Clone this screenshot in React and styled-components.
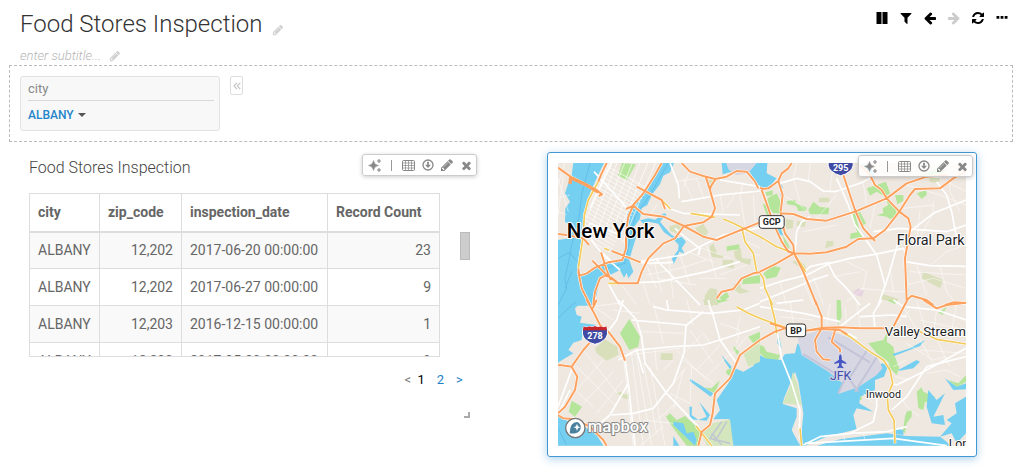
// App.jsx
import React, { useState } from "react";
import styled, { createGlobalStyle } from "styled-components";

const GlobalStyle = createGlobalStyle`
  * {
    box-sizing: border-box;
  }

  body {
    margin: 0;
    background: #fff;
    color: #666;
    font-family: Roboto, "Liberation Sans", sans-serif;
    font-size: 14px;
  }

  button, select {
    font: inherit;
    padding: 0;
    border: 0;
    background: none;
    cursor: pointer;
  }
`;

const Header = styled.header`
  display: flex;
  justify-content: space-between;
  align-items: flex-start;
  padding: 8px 11px 0 20px;
  height: 65px;
`;

const Title = styled.h1`
  display: flex;
  align-items: flex-end;
  gap: 10px;
  margin: 0;
  color: #333;
  font-size: 24px;
  font-weight: 300;
  line-height: 32px;
`;

const Subtitle = styled.p`
  display: flex;
  align-items: center;
  gap: 8px;
  margin: 6px 0 0;
  color: #b5b5b5;
  font-size: 13px;
  font-style: italic;
  font-weight: 300;
  line-height: 18px;
`;

const Actions = styled.div`
  display: flex;
  gap: 8px;
`;

const IconButton = styled.button`
  display: flex;
  align-items: center;
  justify-content: center;
  width: ${(p) => p.$width || 16}px;
  height: 20px;
  color: ${(p) => p.$color || "#000"};
`;

const EditButton = styled(IconButton)`
  color: #d0d0d0;
`;

const FilterBar = styled.section`
  display: flex;
  align-items: flex-start;
  gap: 10px;
  margin: 0 8px 0 9px;
  padding: 10px;
  height: 77px;
  border: 1px dashed #bbb;
`;

const FilterCard = styled.div`
  width: 200px;
  padding: 4px 5px 7px 7px;
  border: 1px solid #e2e2e2;
  border-radius: 3px;
  background: #f8f8f8;
`;

const FilterLabel = styled.label`
  display: block;
  padding-bottom: 3px;
  border-bottom: 1px solid #d8d8d8;
  color: #888;
  font-size: 13px;
  line-height: 16px;
`;

const FilterValue = styled.div`
  display: flex;
  align-items: center;
  gap: 4px;
  padding-top: 6px;
  color: #555;
`;

const FilterSelect = styled.select`
  appearance: none;
  field-sizing: content;
  color: #2486ca;
  font-size: 12px;
  font-weight: 500;
  line-height: 16px;
`;

const CollapseButton = styled.button`
  display: flex;
  align-items: center;
  justify-content: center;
  width: 13px;
  height: 19px;
  border: 1px solid #ddd;
  border-radius: 2px;
  color: #c4c4c4;
`;

const Board = styled.main`
  display: grid;
  grid-template-columns: 461fr 430fr;
  gap: 66px;
  align-items: start;
  padding: 10px 44px 14px 20px;
`;

const Widget = styled.section`
  position: relative;
  padding: ${(p) => (p.$active ? "10px" : "0 10px 0 8px")};
  border: 1px solid ${(p) => (p.$active ? "#4298d4" : "transparent")};
  border-radius: 3px;
  box-shadow: ${(p) => (p.$active ? "0 2px 8px rgba(66, 152, 212, 0.45)" : "none")};
`;

const WidgetTitle = styled.h2`
  margin: 4px 0 14px;
  color: #444;
  font-size: 16px;
  font-weight: 300;
  line-height: 22px;
`;

const Toolbar = styled.div`
  position: absolute;
  top: ${(p) => (p.$active ? 2 : 1)}px;
  right: 3px;
  display: flex;
  align-items: center;
  gap: 3px;
  height: 22px;
  padding: 0 2px 0 4px;
  border: 1px solid #ccc;
  border-radius: 3px;
  background: rgba(255, 255, 255, 0.85);
  box-shadow: 0 1px 4px rgba(0, 0, 0, 0.2);
`;

const Divider = styled.span`
  width: 1px;
  height: 11px;
  margin: 0 5px;
  background: #999;
`;

const TableArea = styled.div`
  display: flex;
  align-items: flex-start;
  justify-content: space-between;
`;

const TableFrame = styled.div`
  height: 164px;
  overflow: hidden;
  border-bottom: 1px solid #ddd;
`;

const Table = styled.table`
  border-collapse: collapse;
  table-layout: fixed;
  width: 411px;
`;

const Th = styled.th`
  width: ${(p) => p.$width}px;
  height: 38px;
  padding: 0 8px;
  border: 1px solid #ddd;
  border-bottom-width: 2px;
  font-weight: 700;
  text-align: left;
`;

const Td = styled.td`
  height: 37px;
  padding: 0 8px;
  border: 1px solid #ddd;
  text-align: ${(p) => (p.$number ? "right" : "left")};
  white-space: nowrap;

  tr:nth-child(odd) > & {
    background: #f9f9f9;
  }
`;

const ScrollThumb = styled.div`
  width: 10px;
  height: 28px;
  margin-top: 39px;
  border: 1px solid #bbb;
  background: #ccc;
`;

const Pager = styled.nav`
  display: flex;
  justify-content: flex-end;
  gap: 12px;
  padding: 15px 7px 0 0;
  font-size: 13px;
  line-height: 16px;
`;

const PageButton = styled.button`
  min-width: 7px;
  margin-left: ${(p) => (p.$current ? "-6px" : 0)};
  color: ${(p) => (p.$current ? "#000" : p.$muted ? "#777" : "#2380c6")};
`;

const ResizeHandle = styled.div`
  width: 6px;
  height: 6px;
  margin: 24px 0 0 auto;
  border: solid #aaa;
  border-width: 0 2px 2px 0;
`;

const Map = styled.svg`
  display: block;
  width: 100%;
  height: auto;
  background: #efe8e1;
`;

const MapText = styled.text`
  fill: ${(p) => p.$color || "#222"};
  font-family: Roboto, "Liberation Sans", sans-serif;
  font-size: ${(p) => p.$size}px;
  font-weight: ${(p) => p.$weight || 400};
  paint-order: stroke;
  stroke: ${(p) => p.$halo || "#fff"};
  stroke-width: ${(p) => (p.$halo === "none" ? 0 : 6)}px;
  stroke-linejoin: round;
`;

const glyphs = {
  pencil:
    "M491 1536l91-91-235-235-91 91v107h128v128h107zm523-928q0-22-22-22-10 0-17 7l-542 542q-7 7-7 17 0 22 22 22 10 0 17-7l542-542q7-7 7-17zm-54-192l416 416-832 832h-416v-416zm683 96q0 53-37 90l-166 166-416-416 166-165q36-38 90-38 53 0 91 38l235 234q37 39 37 91z",
  times:
    "M1490 1322q0 40-28 68l-136 136q-28 28-68 28t-68-28l-294-294-294 294q-28 28-68 28t-68-28l-136-136q-28-28-28-68t28-68l294-294-294-294q-28-28-28-68t28-68l136-136q28-28 68-28t68 28l294 294 294-294q28-28 68-28t68 28l136 136q28 28 28 68t-28 68l-294 294 294 294q28 28 28 68z",
  arrow:
    "M1664 896v128q0 53-32.5 90.5t-84.5 37.5h-704l293 294q38 36 38 90t-38 90l-75 76q-37 37-90 37-52 0-91-37l-651-652q-37-37-37-90 0-52 37-91l651-650q38-38 91-38 52 0 90 38l75 74q38 38 38 91t-38 91l-293 293h704q52 0 84.5 37.5t32.5 90.5z",
  refresh:
    "M1639 1056q0 5-1 7-64 268-268 434.5t-478 166.5q-146 0-282.5-55t-243.5-157l-129 129q-19 19-45 19t-45-19-19-45v-448q0-26 19-45t45-19h448q26 0 45 19t19 45-19 45l-137 137q71 66 161 102t187 36q134 0 250-65t186-179q11-17 53-117 8-23 30-23h192q13 0 22.5 9.5t9.5 22.5zm25-800v448q0 26-19 45t-45 19h-448q-26 0-45-19t-19-45 19-45l138-138q-148-137-349-137-134 0-250 65t-186 179q-11 17-53 117-8 23-30 23h-199q-13 0-22.5-9.5t-9.5-22.5v-7q65-268 270-434.5t480-166.5q146 0 284 55.5t245 156.5l130-129q19-19 45-19t45 19 19 45z",
  pause: "M192 128h640v1536h-640zM960 128h640v1536h-640z",
  filter:
    "M1595 295q17 41-14 70l-493 493v742q0 42-39 59-13 5-25 5-27 0-45-19l-256-256q-19-19-19-45v-486l-493-493q-31-29-14-70 17-39 59-39h1280q42 0 59 39z",
  more: "M192 640h360v360h-360zM716 640h360v360h-360zM1240 640h360v360h-360z",
};

const Glyph = ({ name, size = 14, flip }) => (
  <svg width={size} height={size} viewBox="0 0 1792 1792" fill="currentColor" aria-hidden="true">
    <path d={glyphs[name]} transform={flip ? "translate(1792 0) scale(-1 1)" : undefined} />
  </svg>
);

const Sparkle = () => (
  <svg width="15" height="15" viewBox="0 0 15 15" fill="currentColor" aria-hidden="true">
    <path d="M5.5 2.5 Q6.2 6.8 10.5 7.5 Q6.2 8.2 5.5 12.5 Q4.8 8.2 .5 7.5 Q4.8 6.8 5.5 2.5Z" stroke="currentColor" strokeWidth=".5" />
    <path d="M11 1v4M9 3h4M11 10v4M9 12h4" stroke="currentColor" strokeWidth="1.1" />
  </svg>
);

const Grid = () => (
  <svg width="13" height="11" viewBox="0 0 13 11" fill="none" stroke="currentColor" aria-hidden="true">
    <rect x=".5" y=".5" width="12" height="10" rx="1" />
    <path d="M.5 3h12M.5 5.5h12M.5 8h12M3.5 .5v10M6.5 .5v10M9.5 .5v10" strokeWidth=".7" />
  </svg>
);

const Download = () => (
  <svg width="12" height="12" viewBox="0 0 12 12" fill="none" stroke="currentColor" aria-hidden="true">
    <circle cx="6" cy="6" r="5" strokeWidth="1.3" />
    <path d="M6 2.8v3" strokeWidth="1.8" />
    <path d="M3 5.8h6L6 9Z" fill="currentColor" stroke="none" />
  </svg>
);

// map geometry, split in four tiles that share one coordinate grid
const tiles = [
  {
    x: 0,
    y: 0,
    water: [
      "M100 54H192L170 100L150 145L137 185L132 245L122 300L112 365L118 394L145 385L190 355L245 347L256 295L256 245L262 205L300 155L335 105L365 54H402L390 82L370 92L360 118L335 150L322 180L305 190L300 222L282 245L292 265L275 320L268 345L280 380L265 400L260 384L252 398L240 375L215 388L190 390L177 410L170 450L155 482H54V285L90 280L82 262L92 242L75 230L76 190L90 170L75 145L88 105L95 90Z",
      "M545 54H660V128L645 110L630 82L600 74L575 80L548 88Z",
      "M300 226L325 220L345 224L372 205L380 208L360 230L375 248L395 270L415 280L425 275L438 290L425 310L434 326L418 320L410 340L400 358L396 340L414 316L416 300L398 280L372 262L355 236L325 230L310 236Z",
    ],
    dim: ["M558 54H650L625 84L590 90L566 74Z"],
    park: ["M246 54L288 58L260 106L234 92Z", "M560 304L598 298L598 312L560 318Z", "M610 400L660 390V415L606 418Z", "M82 455L100 433L126 430L122 445L95 465Z", "M538 458L560 440L568 455L550 470Z"],
    moss: ["M388 244L415 236L426 250L410 266L390 258Z", "M465 250L490 236L505 262L490 280Z", "M508 305L520 294L532 328L552 330L548 340L515 336Z", "M548 345L580 345L582 370L548 365Z", "M582 318L602 310L606 340L634 342L630 360L600 350L585 340Z", "M495 450L510 430L530 432L535 480H492Z", "M585 415L598 410L605 430L630 440L600 446L575 430Z", "M500 105L522 102L512 122Z"],
    major: ["M365 165L385 190L430 205L600 210", "M425 170L540 150L660 138", "M300 350L430 330L550 270L660 248", "M405 250L440 280L480 310L475 330", "M205 415L240 480", "M235 415L360 410L500 380L600 350", "M390 54L415 120L418 160", "M300 352L332 355L400 352", "M540 105L660 125", "M240 375L200 340L165 300L140 260L150 235L240 270", "M215 54L150 190", "M162 80L262 190", "M185 322L215 350", "M350 345L480 480"],
    minor: ["M430 100L460 170M405 110L475 100M470 100L490 155M450 70L430 130M330 210L350 180M320 360L350 430M320 390L420 370L500 345M340 340L365 440M385 330L400 460M420 330L450 420M350 400L470 420M440 320L520 350M500 300L530 400M460 300L570 340M540 150L550 200M610 110L600 150L615 240M640 150L645 230M590 140L560 190M620 290L660 310M630 330L660 330M540 390L620 360M480 400L560 400M245 420L290 480M310 415L330 480M54 100L85 200M70 90L54 210M54 160L90 150M54 200L80 210M74 54L54 120"],
    high: ["M54 68L95 97L130 115L175 140L186 148L176 153", "M200 54L185 85L175 110", "M365 54L345 90L310 145L280 180L265 215L258 260L258 310L247 345L205 352L165 368L140 385L118 392L115 372", "M115 380L125 430L150 480", "M160 480L165 440L180 400L195 392L215 398L235 415H293L305 380L325 340L370 295L405 280L432 243", "M258 192L280 182L310 207L370 215L432 243L490 275L530 285L570 268L610 252L660 232", "M290 125L365 165L375 192", "M425 54L450 80L490 93L525 102L560 95L590 78L620 80L645 110L655 130", "M497 95L510 135L525 190L515 215L490 232L432 243", "M527 102L512 125L510 140", "M215 318L302 352", "M157 347L200 390L235 415", "M183 322L200 375L212 405", "M54 267L80 270L130 280L147 300", "M530 460L545 440L580 432L605 400L640 385L660 382"],
    yellow: ["M175 110L145 165L133 210L130 270L115 370", "M365 165L392 192", "M452 205L525 217", "M550 222L580 235L610 250L660 275", "M607 255L615 290L640 325L650 380", "M205 415H235", "M193 310L207 316"],
  },
  {
    x: 660,
    y: 0,
    water: ["M0 54H22L20 85L50 100L25 130L0 128Z", "M62 115L68 125L62 155Z", "M45 240L62 250L70 272L58 268Z", "M300 54L335 70L345 98L330 95Z"],
    dim: [],
    park: ["M8 178L18 178L38 225L28 230Z", "M22 160L50 145L64 175L60 205L40 205L28 190Z", "M16 142L38 136L38 150L20 154Z", "M80 168L105 165L110 175L140 188L138 198L115 198L108 182L82 178Z", "M145 195L160 170L180 186L208 188L205 208L150 208Z", "M68 270L85 298L90 312L75 302Z", "M10 385L40 362L62 368L50 395L20 402Z", "M272 208L285 205L300 260L310 275L270 282L272 265L292 262Z", "M290 205L300 200L318 235L308 242Z", "M320 130L378 110L390 145L375 155L350 140L330 152Z", "M405 150L430 150L430 168L412 178Z", "M350 210L370 205L368 190L385 180L378 165L410 185L408 215L390 222L380 215Z", "M470 145L500 135L500 150L485 162Z", "M230 475L240 465L243 480H230Z", "M475 95L530 70L560 80L520 90Z"],
    moss: ["M178 158H208V172H176Z", "M78 222L100 226L98 250L78 252Z", "M112 228L138 232L135 246L110 242Z", "M200 288H220V302L195 310Z", "M490 380L550 405L540 430L485 400Z", "M370 448L415 462L408 475L362 462Z", "M95 350L120 345L138 365L138 380Z", "M510 95L540 100L536 115L508 110Z"],
    major: ["M60 115L110 100L150 110L190 138L230 140", "M225 140L300 115L350 90L410 90L470 70", "M105 318L110 260L125 230L150 215", "M230 100L265 180L285 240L318 285L350 330L375 420", "M0 430L60 410L140 390L210 355L270 340L345 328L430 310L435 320", "M450 260L520 205L618 165", "M340 260L420 250L560 260L618 240", "M375 425L395 360L415 290L435 280", "M435 350L510 362L618 364", "M205 355L225 395L260 430L300 480", "M375 420L355 480", "M0 470L100 430L160 405L205 390", "M135 380L150 365L210 352", "M530 110L560 150L575 200L590 280"],
    minor: ["M70 150L120 180L140 200M110 54L100 100L120 170M150 54L145 110M220 54L210 135M230 150L170 220M345 180L330 250M440 120L540 150L618 180M480 200L470 290M520 170L520 205L470 290M570 60L570 140L600 200M130 405L160 480M160 395L190 480M260 350L320 380L310 430L260 470M220 395L300 380M0 440L60 480M60 410L80 480M300 430L410 440L435 440M390 370L400 440M450 380L618 390M470 360L500 450M510 362L560 320L618 300M540 364L560 440L590 480M440 420L520 400L618 430M310 115L320 180M430 190L520 180M230 240L130 260M560 110L618 140"],
    high: ["M0 128L8 132L25 130L55 108L65 85L85 70L95 54", "M55 108L68 150L62 200", "M5 135L25 190L40 235L65 290L85 320L102 325", "M60 205L100 207L140 222L200 227L285 200L380 160L440 115L500 95L560 90", "M250 90L285 195L310 250L345 288", "M62 205L68 240L75 265L100 300L102 325L130 380L170 480", "M0 380L50 355L102 325L150 326L200 322L260 305L295 282L340 280L375 255L418 200L450 150L465 132L540 130L580 100L618 80", "M300 60L330 90L345 120L365 135L380 160L418 200L445 220L452 245L435 340L440 465", "M440 465L455 452L500 465L520 480", "M555 480L580 472L618 474"],
    yellow: ["M0 275L50 305L102 325", "M102 325L137 380", "M0 385L10 400L15 430L38 480"],
  },
  {
    x: 0,
    y: 465,
    water: ["M54 0H132L105 25L110 45L125 50L120 68L170 75L130 90L125 120L100 128L85 150L100 160L58 185L54 190Z", "M54 345L85 365L140 385L170 405L190 437H54Z", "M660 160L640 198L610 215L585 205L565 250L530 300L540 330L520 358L565 357L580 437H660Z", "M450 236L520 280L512 290L450 244Z", "M478 306L510 345L500 362L450 358L448 320L456 320L455 345L475 360L500 350Z", "M400 365L430 370L440 400L460 395L470 420L465 437L400 375Z", "M545 165L575 200L570 208L555 185Z", "M400 408L418 437H400Z"],
    dim: [],
    park: ["M268 57L300 110L295 140L268 150L240 100Z", "M95 302L126 320L105 350L86 335Z", "M378 350L390 340L410 360L435 348L485 395L478 437H440L400 385Z", "M470 250L485 262L515 265L540 240L525 280L515 275Z", "M625 110L660 95V130L640 130Z", "M580 137L598 155L592 165L582 150Z", "M560 210L575 205L570 228L558 220Z", "M530 0H568L535 10Z"],
    moss: ["M165 145L195 118L232 140L235 165L200 182L170 160Z", "M362 160H398V180H362Z", "M228 280L245 275L255 285L268 278L265 298L250 295Z", "M485 0H530L515 20Z"],
    sand: ["M510 372L570 358L580 437H500L485 400Z", "M610 160L650 130L660 135V185L625 200Z"],
    major: ["M235 0L290 60L305 110L315 190L380 280L475 380", "M255 180L265 250L285 437", "M54 320L95 210", "M340 20L380 30L510 40L610 30L660 10", "M515 30L540 120L590 190", "M380 0L385 30", "M275 60L440 75L490 35", "M438 75L432 160L400 250L340 325L280 340L215 345", "M235 180L290 150L400 140L490 135L540 120L660 80", "M265 250L210 345L180 370", "M200 100L230 60L250 0", "M60 330L90 270", "M290 150L310 220", "M505 0L515 38"],
    minor: ["M130 150L240 290M110 200L230 320M95 260L160 320M190 180L110 270M220 215L130 310M250 240L170 340M250 170L280 437M275 165L310 437M290 170L335 437M310 190L350 400M330 200L375 437M345 150L350 210M340 10L370 130M300 95L430 100M230 170L420 145M370 210L400 180M410 150L470 210L500 240M450 90L520 190M430 180L520 250M430 160L490 100L510 130M470 210L540 135M500 230L570 160M370 290L440 200M390 280L450 310M350 360L420 300M300 437L370 380M220 60L160 20M220 30L300 40M440 0L460 75M430 210L400 330M455 200L450 310M310 360L400 370M150 20L235 10M540 70L600 90L590 130M600 50L590 100M570 170L620 110"],
    high: ["M140 0L160 35L180 75L205 95L240 140L255 182", "M170 0L158 25", "M158 118L130 150L95 200L60 195L54 196", "M95 200L112 230L105 270L75 320L54 340", "M54 345L70 355L105 358L150 380L190 420L200 437", "M660 120L600 165L570 235L525 280L518 340L510 375L485 395L475 437"],
    yellow: ["M590 20L625 40L660 55", "M468 378L515 437"],
  },
  {
    x: 660,
    y: 465,
    water: [
      "M0 165L15 175L62 180L75 162L105 160L112 130L205 210L250 240L235 280L290 255L365 190L385 195L372 230L345 240L345 270L300 290L298 310L340 335L290 325L280 345L290 388L200 410L135 437H0Z",
      "M55 100L65 145L52 130Z",
      "M170 437L240 418L380 400L440 408L540 410L560 425L570 437Z",
      "M398 162L450 145L495 120L480 138L402 168Z",
      "M415 210L470 180L480 185L460 205L420 212Z",
      "M505 270L530 300L555 280L535 320L520 350L550 345L555 375L515 370L500 320Z",
      "M555 235L590 260L618 250V400L590 430L575 400L540 410L575 370L560 360L590 340L585 310L618 290V268L580 270Z",
      "M405 385L430 390L430 405L405 402Z",
    ],
    land: ["M105 215L115 245L130 340L125 395L118 437H120L95 390L110 350L110 325L68 312L72 295Z"],
    dim: ["M112 110L180 90L220 95L270 115L345 160L368 205L350 225L295 262L235 282L250 252L205 215L125 165Z"],
    park: ["M325 130L370 120L380 100L384 95L380 125L400 140L405 170L418 205L410 225L390 205L385 185L350 160Z", "M230 0H242L245 50L235 75L230 50Z", "M0 135L12 140L20 155L60 165L55 180L15 176L0 160Z", "M470 275L485 262L490 275L525 290L520 310L495 305L490 330L475 325Z", "M245 365L255 345L275 340L270 360L250 395L232 392Z", "M440 335L455 330L455 350L440 370L435 400L428 395L435 350Z", "M565 240L595 250L618 225V245L590 262Z", "M380 0H410L405 12Z", "M535 38L560 20L548 45Z", "M292 300L305 285L305 300Z"],
    moss: [],
    sand: ["M98 215L112 250L125 315L68 310L90 260Z"],
    major: ["M52 95L65 175L95 250L120 330L118 390", "M0 20L130 40L240 65", "M345 85L340 40L365 0", "M240 80L330 10", "M130 435L180 410L270 400L380 395L440 380", "M270 400L340 365L350 320L350 280", "M135 430L400 415L560 437", "M395 250L410 255L500 210L618 145", "M395 330L440 290L500 200L618 170", "M400 0L430 20L530 30L618 60", "M262 100L290 115", "M50 10L130 0", "M300 50L400 45L440 50"],
    minor: ["M90 0L100 70M160 60L60 50M210 10L200 75M255 20L260 80M290 0L300 80M430 20L470 90M470 0L500 100M530 25L520 110M590 10L570 120M480 60L618 90M440 130L520 180L560 170M470 100L525 200M530 120L570 200M405 230L450 240M400 200L440 180M480 150L618 160M500 220L560 210L600 230M310 280L340 310M420 290L450 330L480 350M450 30L410 70M250 400L255 425M310 400L315 420"],
    high: ["M0 120L45 95L75 85L135 92L190 83L240 82L300 85H375", "M165 0L185 50L185 85L165 120L170 155L190 178L210 180", "M135 92L185 87L240 90L262 103", "M225 92L215 125L240 148L240 157", "M442 0L400 80", "M490 0L530 25L560 15L618 8", "M30 70L80 85"],
    yellow: ["M0 55L75 82", "M30 0L45 60L50 100", "M245 95L270 110L330 155L370 180L390 210L398 250L382 290L385 330L402 360L405 430", "M375 90L480 95L530 118L618 132", "M120 385L125 437"],
  },
];

const Layer = ({ kind, ...rest }) => (
  <g {...rest}>
    {tiles.map((tile, i) => (
      <path key={i} d={(tile[kind] || []).join("")} transform={`translate(${tile.x} ${tile.y})`} />
    ))}
  </g>
);

// Manhattan street grid
const streets = [];
for (let i = 0; i < 20; i++) {
  const x = 195 - i * 4;
  const y = 60 + i * 11;
  streets.push(`M${x} ${y}L${x + 130 - i * 2} ${y + 72 - i}`);
}
for (let i = 0; i < 7; i++) {
  streets.push(`M${208 + i * 23} 54L${140 + i * 18} ${220 + i * 12}`);
}

const InterstateShield = ({ x, y, number }) => (
  <g transform={`translate(${x} ${y})`}>
    <path d="M-34 -24Q-26 -18 -18 -24Q-8 -19 0 -25Q8 -19 18 -24Q26 -18 34 -24Q44 2 28 16Q16 27 0 30Q-16 27 -28 16Q-44 2 -34 -24Z" fill="#3f4ba3" stroke="#fff" strokeWidth="3" />
    <path d="M-34 -24Q-26 -18 -18 -24Q-8 -19 0 -25Q8 -19 18 -24Q26 -18 34 -24L36 -12H-36Z" fill="#c8242b" />
    <MapText $size={27} $weight={700} $color="#fff" $halo="none" textAnchor="middle" y="15">{number}</MapText>
  </g>
);

const RoadBadge = ({ x, y, width, children }) => (
  <g transform={`translate(${x} ${y})`}>
    <rect x={-width / 2} y="-19" width={width} height="38" rx="8" fill="#fff" stroke="#333" strokeWidth="3" />
    <MapText $size={27} $weight={700} $halo="none" textAnchor="middle" y="10">{children}</MapText>
  </g>
);

const CityMap = () => (
  <Map viewBox="54 54 1224 849" role="img" aria-label="New York map">
    <Layer kind="moss" fill="#d9dfba" />
    <Layer kind="park" fill="#b5e59a" />
    <Layer kind="water" fill="#75cff0" />
    <Layer kind="land" fill="#efe8e1" />
    <Layer kind="sand" fill="#d3e6bd" />
    <Layer kind="dim" fill="#d6d7e2" />
    <g fill="none" stroke="#5bb5e4" strokeWidth="2">
      <path d="M150 54L125 150L118 210L95 300L88 340L75 400L80 430L54 480M54 340L88 322L108 345M95 380L75 430M385 54L330 150L285 215L270 280L255 355L180 375M54 520L85 490L110 470M54 850L80 900" />
    </g>
    <g fill="none" stroke="#c4c4d8" strokeWidth="6">
      <path d="M790 627L885 685M865 577L990 652M980 617L925 705M1010 637L945 740M955 740L920 690M920 690L895 745" />
    </g>
    <g fill="none" stroke="#c2c8cf" strokeWidth="5">
      <path d="M545 830L510 880L570 895M560 830L525 890M515 865L545 900" />
    </g>
    <path d="M940 440L955 430L972 438L965 455L945 450Z" fill="#e6d3df" />
    <Layer kind="minor" fill="none" stroke="#fff" strokeOpacity=".75" strokeWidth="2" />
    <path d={streets.join("")} fill="none" stroke="#fff" strokeWidth="2" />
    <Layer kind="major" fill="none" stroke="#fff" strokeWidth="5" strokeLinejoin="round" />
    <Layer kind="yellow" fill="none" stroke="#fff" strokeWidth="8" strokeLinejoin="round" />
    <Layer kind="high" fill="none" stroke="#fff" strokeWidth="9" strokeLinejoin="round" />
    <Layer kind="yellow" fill="none" stroke="#f4ca58" strokeWidth="5" strokeLinejoin="round" />
    <Layer kind="high" fill="none" stroke="#ffa15e" strokeWidth="6" strokeLinejoin="round" />
    <path d="M90 117L92 98L135 118L175 141" fill="none" stroke="#ffa15e" strokeWidth="10" />
    <path d="M901 628q3 0 4 8v8l14 9v4l-14-4v9l5 5v3l-9-2l-9 2v-3l5-5v-9l-14 4v-4l14-9v-8q1-8 4-8Z" fill="#4555c4" />
    <InterstateShield x={902} y={62} number="295" />
    <InterstateShield x={165} y={568} number="278" />
    <RoadBadge x={695} y={231} width={75}>GCP</RoadBadge>
    <RoadBadge x={768} y={556} width={58}>BP</RoadBadge>
    <MapText $size={62} $weight={500} $color="#000" x="80" y="280">New York</MapText>
    <MapText $size={43} x="1070" y="301">Floral Park</MapText>
    <MapText $size={40} x="1034" y="573">Valley Stream</MapText>
    <MapText $size={32} x="978" y="758">Inwood</MapText>
    <MapText $size={37} $color="#3f4bb0" $halo="#d6d7e2" x="870" y="704">JFK</MapText>
    <MapText $size={37} x="1226" y="910">Long Beach</MapText>
    <g transform="translate(106 849)">
      <circle r="29" fill="#fff" stroke="#777" strokeWidth="4" />
      <path d="M-17 16Q-16 -18 5 -18A17 17 0 0 1 5 14Q-6 18 -17 16Z" fill="#4a819d" />
      <path d="M5 -13L8 -5L15 -2L8 1L5 9L2 1L-5 -2L2 -5Z" fill="#fff" />
    </g>
    <MapText $size={50} $weight={500} $color="#fff" $halo="#888" x="143" y="862">mapbox</MapText>
  </Map>
);

const WidgetToolbar = ({ active }) => (
  <Toolbar $active={active}>
    <IconButton aria-label="Explore" $color="#888"><Sparkle /></IconButton>
    <Divider />
    <IconButton aria-label="View data" $color="#888"><Grid /></IconButton>
    <IconButton aria-label="Download" $color="#888" $width={17}><Download /></IconButton>
    <IconButton aria-label="Edit" $color="#888"><Glyph name="pencil" size={14} /></IconButton>
    <IconButton aria-label="Remove" $color="#888"><Glyph name="times" size={13} /></IconButton>
  </Toolbar>
);

const rows = [
  ["ALBANY", "12,202", "2017-06-20 00:00:00", 23],
  ["ALBANY", "12,202", "2017-06-27 00:00:00", 9],
  ["ALBANY", "12,203", "2016-12-15 00:00:00", 1],
  ["ALBANY", "12,203", "2017-05-30 00:00:00", 9],
];

const App = () => {
  const [city, setCity] = useState("ALBANY");

  return (
    <>
      <GlobalStyle />
      <Header>
        <div>
          <Title>
            Food Stores Inspection
            <EditButton $width={12} aria-label="Edit title"><Glyph name="pencil" /></EditButton>
          </Title>
          <Subtitle>
            enter subtitle...
            <EditButton $width={12} aria-label="Edit subtitle"><Glyph name="pencil" /></EditButton>
          </Subtitle>
        </div>
        <Actions>
          <IconButton aria-label="Pause"><Glyph name="pause" /></IconButton>
          <IconButton aria-label="Filter"><Glyph name="filter" /></IconButton>
          <IconButton aria-label="Back"><Glyph name="arrow" /></IconButton>
          <IconButton aria-label="Forward" $color="#ccc"><Glyph name="arrow" flip /></IconButton>
          <IconButton aria-label="Refresh"><Glyph name="refresh" /></IconButton>
          <IconButton aria-label="More"><Glyph name="more" /></IconButton>
        </Actions>
      </Header>

      <FilterBar>
        <FilterCard>
          <FilterLabel htmlFor="city">city</FilterLabel>
          <FilterValue>
            <FilterSelect id="city" value={city} onChange={(e) => setCity(e.target.value)}>
              <option>ALBANY</option>
            </FilterSelect>
            <svg width="8" height="4" viewBox="0 0 8 4" fill="currentColor" aria-hidden="true">
              <path d="M0 0H8L4 4Z" />
            </svg>
          </FilterValue>
        </FilterCard>
        <CollapseButton aria-label="Collapse filters">
          <svg width="8" height="8" viewBox="0 0 8 8" fill="none" stroke="currentColor" strokeWidth="1.2" aria-hidden="true">
            <path d="M4 .8L1 4L4 7.2M7.3 .8L4.3 4L7.3 7.2" />
          </svg>
        </CollapseButton>
      </FilterBar>

      <Board>
        <Widget>
          <WidgetToolbar />
          <WidgetTitle>Food Stores Inspection</WidgetTitle>
          <TableArea>
            <TableFrame>
              <Table>
                <thead>
                  <tr>
                    <Th $width={70}>city</Th>
                    <Th $width={82}>zip_code</Th>
                    <Th $width={146}>inspection_date</Th>
                    <Th $width={112}>Record Count</Th>
                  </tr>
                </thead>
                <tbody>
                  {rows.map((row, i) => (
                    <tr key={i}>
                      <Td>{row[0]}</Td>
                      <Td $number>{row[1]}</Td>
                      <Td>{row[2]}</Td>
                      <Td $number>{row[3]}</Td>
                    </tr>
                  ))}
                </tbody>
              </Table>
            </TableFrame>
            <ScrollThumb />
          </TableArea>
          <Pager aria-label="Pages">
            <PageButton $muted>&lt;</PageButton>
            <PageButton $current>1</PageButton>
            <PageButton>2</PageButton>
            <PageButton>&gt;</PageButton>
          </Pager>
          <ResizeHandle />
        </Widget>

        <Widget $active>
          <WidgetToolbar active />
          <CityMap />
        </Widget>
      </Board>
    </>
  );
};

export default App;
